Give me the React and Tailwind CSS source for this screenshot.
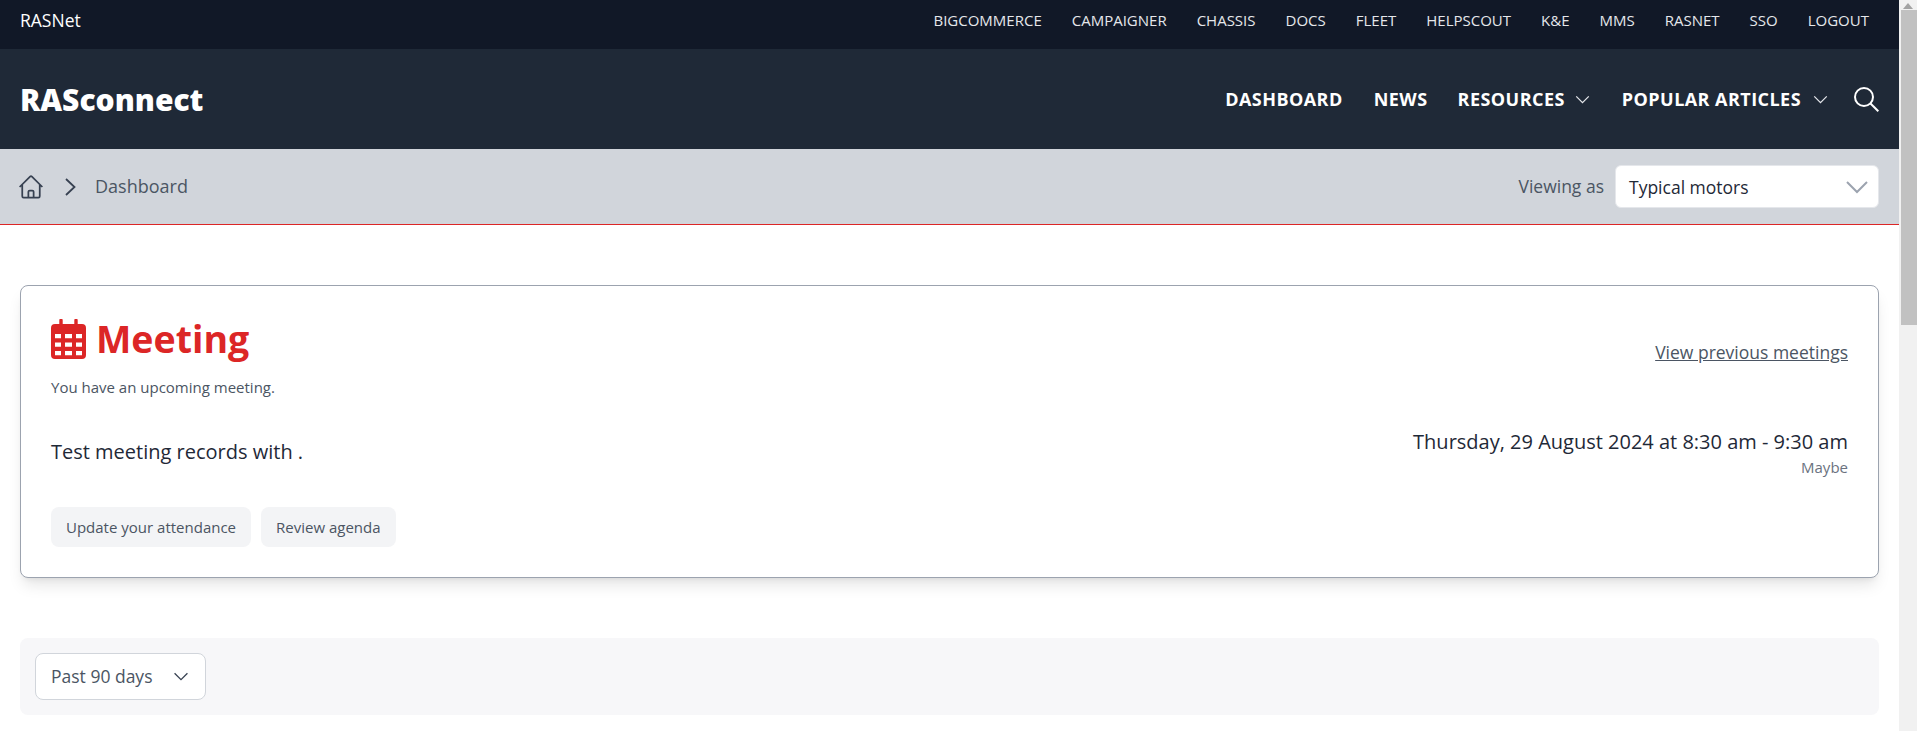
import React from 'react';

const topLinks = ['BigCommerce', 'Campaigner', 'Chassis', 'Docs', 'Fleet', 'HelpScout', 'K&E', 'MMS', 'RASNet', 'SSO', 'Logout'];

const Chevron = ({ className }) => (
  <svg className={className} viewBox="0 0 24 14" fill="none" stroke="currentColor" strokeWidth="2">
    <path d="M2 2l10 10L22 2" />
  </svg>
);

const App = () => {
  return (
    <div className="flex h-screen overflow-hidden bg-white font-['Open_Sans',sans-serif]">
      <div className="flex-1 min-w-0">
        {/* Top utility bar */}
        <div className="h-[49px] bg-[#111827] flex items-center justify-between pl-5 pr-[30px] pb-[9px] text-[15px]">
          <a className="text-white text-[17.5px]">RASNet</a>
          <nav className="flex gap-[30px]">
            {topLinks.map(link => (
              <a key={link} className="uppercase text-[#e5e7eb]">{link}</a>
            ))}
          </nav>
        </div>

        {/* Main header */}
        <header className="h-[100px] bg-[#1f2937] flex items-center justify-between px-5 text-white">
          <a className="text-[30px] font-extrabold">RASconnect</a>
          <nav className="flex items-center text-[18px] font-bold uppercase tracking-[0.45px]">
            <a>Dashboard</a>
            <a className="ml-[31px]">News</a>
            <a className="ml-[30px]">Resources</a>
            <Chevron className="w-[15px] h-[9px] ml-[10px] stroke-[#e5e7eb]" />
            <a className="ml-[32px]">Popular Articles</a>
            <Chevron className="w-[15px] h-[9px] ml-[12px] stroke-[#e5e7eb]" />
            <svg className="w-[25px] h-[25px] ml-[26px]" viewBox="0 0 25 25" fill="none" stroke="currentColor" strokeWidth="2">
              <circle cx="10" cy="10" r="9" />
              <path d="M16.5 16.5l7.8 7.8" />
            </svg>
          </nav>
        </header>

        {/* Breadcrumb bar */}
        <div className="h-[76px] bg-[#d1d5db] border-b border-[#dc2626] flex items-center justify-between px-5">
          <div className="flex items-center text-[#374151]">
            <svg className="w-7 h-7 -ml-[3px]" viewBox="0 0 24 24" fill="none" stroke="currentColor" strokeWidth="1.5">
              <path d="M2.25 12l8.954-8.955c.44-.439 1.152-.439 1.591 0L21.75 12M4.5 9.75v10.125c0 .621.504 1.125 1.125 1.125H9.75v-4.875c0-.621.504-1.125 1.125-1.125h2.25c.621 0 1.125.504 1.125 1.125V21h4.125c.621 0 1.125-.504 1.125-1.125V9.75M8.25 21h8.25" />
            </svg>
            <svg className="w-[11px] h-[18px] ml-[20px]" viewBox="0 0 11 18" fill="none" stroke="currentColor" strokeWidth="1.8">
              <path d="M1 1l8.5 8L1 17" />
            </svg>
            <span className="ml-[19px] text-[18px] text-[#4b5563]">Dashboard</span>
          </div>
          <div className="flex items-center">
            <span className="text-[17.5px] text-[#4b5563] mr-[11px]">Viewing as</span>
            <div className="w-[264px] h-[43px] bg-white rounded-md border border-[#e5e7eb] flex items-center justify-between pl-[13px] pr-[9px]">
              <span className="text-[17.5px] text-[#1f2937] mt-[2px]">Typical motors</span>
              <Chevron className="w-[24px] h-[14px] text-[#9ca3af]" />
            </div>
          </div>
        </div>

        {/* Meeting card */}
        <div className="mx-5 mt-[60px] h-[293px] rounded-lg border border-[#9ca3af] shadow-lg bg-white pt-[33px] px-[30px]">
          <div className="flex items-center justify-between h-[40px]">
            <div className="flex items-center text-[#dc2626]">
              <svg className="w-[35px] h-[40px]" viewBox="0 0 35 40">
                <path
                  fill="currentColor"
                  fillRule="evenodd"
                  d="M8.3 1.3a1.7 1.7 0 0 1 3.4 0V5h11.6V1.3a1.7 1.7 0 0 1 3.4 0V5H31a4 4 0 0 1 4 4v27a4 4 0 0 1-4 4H4a4 4 0 0 1-4-4V9a4 4 0 0 1 4-4h4.3zM4 15v4.3h6V15zm10 0v4.3h7V15zm11 0v4.3h6V15zM4 23.5v4.3h6v-4.3zm10 0v4.3h7v-4.3zm11 0v4.3h6v-4.3zM4 32v4.3h6V32zm10 0v4.3h7V32zm11 0v4.3h6V32z"
                />
              </svg>
              <h1 className="ml-[10px] text-[37.5px] font-bold">Meeting</h1>
            </div>
            <a className="text-[17.5px] text-[#4b5563] underline mt-[27px]">View previous meetings</a>
          </div>
          <p className="mt-[17px] text-[15px] text-[#4b5563]">You have an upcoming meeting.</p>
          <div className="flex justify-between mt-[24px]">
            <p className="mt-[14px] text-[20px] text-[#1f2937]">Test meeting records with .</p>
            <div className="text-right">
              <p className="mt-[4px] text-[20px] text-[#1f2937]">Thursday, 29 August 2024 at 8:30 am - 9:30 am</p>
              <p className="-mt-[1px] text-[15px] text-[#6b7280]">Maybe</p>
            </div>
          </div>
          <div className="flex gap-[10px] mt-[29px]">
            <a className="h-[40px] flex items-center px-[15px] rounded-lg bg-[#f3f4f6] text-[15px] text-[#4b5563]">Update your attendance</a>
            <a className="h-[40px] flex items-center px-[15px] rounded-lg bg-[#f3f4f6] text-[15px] text-[#4b5563]">Review agenda</a>
          </div>
        </div>

        {/* Date range filter */}
        <div className="mx-5 mt-[60px] h-[77px] rounded-lg bg-[#f7f7f9] p-[15px]">
          <div className="w-[171px] h-[47px] bg-white rounded-lg border border-[#d1d5db] flex items-center justify-between pl-[15px] pr-[16px]">
            <span className="text-[17.5px] text-[#4b5563]">Past 90 days</span>
            <Chevron className="w-[16px] h-[9px] text-[#374151]" />
          </div>
        </div>
      </div>

      {/* Scrollbar */}
      <div className="w-[18px] shrink-0 bg-[#f1f1f1] relative">
        <svg className="absolute top-[3px] left-[4px] w-[10px] h-[6px]" viewBox="0 0 10 6">
          <path d="M5 0l5 6H0z" fill="#a3a3a3" />
        </svg>
        <div className="absolute top-[10px] left-[2px] w-[16px] h-[315px] bg-[#c1c1c1]"></div>
      </div>
    </div>
  );
};

export default App;
